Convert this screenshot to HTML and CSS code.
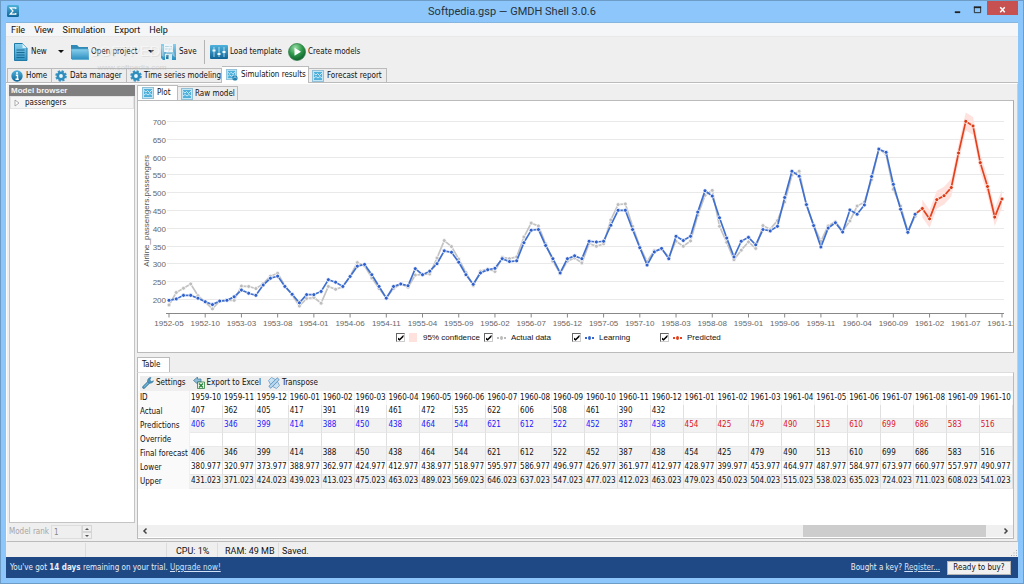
FILE: index.html
```html
<!DOCTYPE html>
<html lang="en">
<head>
<meta charset="utf-8">
<title>Softpedia.gsp — GMDH Shell 3.0.6</title>
<link rel="stylesheet" href="styles.css">
</head>
<body>
<svg width="0" height="0" class="defs" aria-hidden="true">
  <defs>
    <linearGradient id="blue" x1="0" y1="0" x2="0" y2="1"><stop offset="0" stop-color="#4fb3dc"/><stop offset="1" stop-color="#0f6496"/></linearGradient>
    <linearGradient id="sky" x1="0" y1="0" x2="0" y2="1"><stop offset="0" stop-color="#8ad0ee"/><stop offset="1" stop-color="#2c8fc0"/></linearGradient>
    <radialGradient id="green" cx=".4" cy=".25" r=".8"><stop offset="0" stop-color="#9bdca6"/><stop offset=".5" stop-color="#2f9a4b"/><stop offset="1" stop-color="#0c5a2a"/></radialGradient>
    <symbol id="i-chart" viewBox="0 0 12 12">
      <rect x=".5" y=".5" width="11" height="11" fill="#c4e5f4" stroke="#8fc0d8"/>
      <rect x="2" y="2" width="8" height="8" fill="#4fb0da"/>
      <path d="M2 3.500l2 1.500 1.500-1.500 2 2L10 3M2 8l2-1.500L6 8l2-1.500L10 8" fill="none" stroke="#e8f7ff" stroke-width=".8"/>
    </symbol>
    <symbol id="i-gear" viewBox="0 0 12 12">
      <circle cx="6" cy="6" r="4.800" fill="none" stroke="#3a95c2" stroke-width="2" stroke-dasharray="2.200 1.570"/>
      <circle cx="6" cy="6" r="3.200" fill="#e9f6fc" stroke="#2f8dbd" stroke-width="2.600"/>
    </symbol>
  </defs>
</svg>
<div class="window">
  <header class="titlebar">
    <svg class="app-icon" viewBox="0 0 12 12"><rect width="12" height="12" rx="1.500" fill="url(#blue)"/><path d="M8.800 4V2.800H3.200L6 6 3.200 9.200h5.600V8" fill="none" stroke="#fff" stroke-width="1.200"/></svg>
    <h1 class="title">Softpedia.gsp — GMDH Shell 3.0.6</h1>
    <div class="window-buttons">
      <button class="wb" aria-label="Minimize"><svg viewBox="0 0 10 10"><path d="M2 8h6" stroke="#222" stroke-width="2"/></svg></button>
      <button class="wb" aria-label="Maximize"><svg viewBox="0 0 10 10"><path d="M1.500 2v6.500h7V2" fill="none" stroke="#222"/><path d="M1 2.500h8" stroke="#222" stroke-width="2"/></svg></button>
      <button class="wb close" aria-label="Close"><svg viewBox="0 0 10 10"><path d="M2.500 2.500l5 5.500M7.500 2.500l-5 5.500" stroke="#fff" stroke-width="1.700"/></svg></button>
    </div>
  </header>

  <div class="client">
    <nav class="menu">
      <button>File</button><button>View</button><button>Simulation</button><button>Export</button><button>Help</button>
    </nav>

    <div class="toolbar">
      <button class="tool new"><svg class="big" viewBox="0 0 18 18"><path d="M3.500 .5h8L16 5v12.500H3.500z" fill="url(#sky)" stroke="#1f7aa8"/><path d="M11.500 .5V5H16z" fill="#d8f0fb"/><path d="M5.500 7h8M5.500 9.500h8M5.500 12h8M5.500 14.500h8" stroke="#1a6a96" stroke-width="1"/></svg>New</button>
      <button class="drop" aria-label="New options"></button>
      <button class="tool open"><svg class="big" viewBox="0 0 18 18"><path d="M0 2h6l2 2h9v12H0z" fill="#2f8ab8"/><path d="M0 6h17l1 10.500H1z" fill="url(#sky)" stroke="#4ea5cb" stroke-width=".6"/></svg>Open project</button>
      <button class="drop" aria-label="Open options"></button>
      <button class="tool save"><svg class="big" viewBox="0 0 18 18"><path d="M0 1h15v16H2l-2-2z" fill="url(#sky)"/><path d="M3 1h9v8H3z" fill="#edf6fa"/><path d="M4 3.500h7M4 6h7" stroke="#b8d5e2"/><path d="M4 11h7v6H4z" fill="#d9edf5"/><path d="M5 12h2.500v4H5z" fill="#28789f"/></svg>Save</button>
      <span class="divider"></span>
      <button class="tool load"><svg class="big" viewBox="0 0 18 18"><rect y="2" width="18" height="14" rx="1" fill="url(#blue)"/><path d="M4 4v10M9 4v10M14 4v10" stroke="#cdeaf7" stroke-width=".8"/><path d="M2.500 7.500h3M7.500 11h3M12.500 9h3" stroke="#f2fbff" stroke-width="2"/></svg>Load template</button>
      <button class="tool create"><svg class="big" viewBox="0 0 18 18"><circle cx="9" cy="9" r="8.500" fill="url(#green)" stroke="#2b7a45" stroke-width=".7"/><path d="M6.500 4.800l6.500 4-6.500 4z" fill="#fff"/></svg>Create models</button>
      <div class="watermark" aria-hidden="true"><span class="wm-name">SOFTPEDIA</span><span class="wm-site">www.softpedia.com</span></div>
    </div>

    <div class="tabs main-tabs" role="tablist">
      <button role="tab" class="tab t-home"><svg class="ico" viewBox="0 0 12 12"><circle cx="6" cy="6" r="5.700" fill="url(#blue)"/><path d="M4.800 5.200h1.700V9M4.500 9.200h3.300" fill="none" stroke="#fff" stroke-width="1.400"/><circle cx="6" cy="3" r="1" fill="#fff"/></svg>Home</button>
      <button role="tab" class="tab t-data"><svg class="ico"><use href="#i-gear"/></svg>Data manager</button>
      <button role="tab" class="tab t-time tight"><svg class="ico"><use href="#i-gear"/></svg>Time series modeling</button>
      <button role="tab" class="tab t-sim active" aria-selected="true"><svg class="ico" viewBox="0 0 12 12"><use href="#i-chart" width="11" height="11"/><circle cx="9" cy="9" r="2.600" fill="#2380b0"/><path d="M7.500 9c1-1.300 2-1.300 3 0" stroke="#d9f1fb" fill="none" stroke-width=".9"/></svg>Simulation results</button>
      <button role="tab" class="tab t-report"><svg class="ico"><use href="#i-chart"/></svg>Forecast report</button>
    </div>

    <main class="workspace">
      <aside class="browser">
        <h2 class="browser-title">Model browser</h2>
        <div class="tree" role="tree">
          <div class="tree-row" role="treeitem"><svg class="twist" viewBox="0 0 6 8"><path d="M1 1l4 3-4 3z" fill="#fff" stroke="#999" stroke-width=".8"/></svg>passengers</div>
        </div>
        <div class="rank">
          <label for="rank">Model rank</label>
          <input id="rank" type="number" value="1" disabled>
          <span class="spin"><button disabled aria-label="Increase"><i class="up"></i></button><button disabled aria-label="Decrease"><i class="down"></i></button></span>
        </div>
      </aside>

      <section class="content">
        <div class="tabs plot-tabs" role="tablist">
          <button role="tab" class="tab t-plot active" aria-selected="true"><svg class="ico"><use href="#i-chart"/></svg>Plot</button>
          <button role="tab" class="tab t-raw tight"><svg class="ico"><use href="#i-chart"/></svg>Raw model</button>
        </div>
        <div class="plot">
          <svg id="chart" class="chart" role="img" aria-label="Airline passengers forecast"></svg>
          <div class="legend">
            <label><input type="checkbox" checked><span class="swatch"></span>95% confidence</label>
            <label><input type="checkbox" checked><span class="mark gray"></span>Actual data</label>
            <label><input type="checkbox" checked><span class="mark blue"></span>Learning</label>
            <label><input type="checkbox" checked><span class="mark red"></span>Predicted</label>
          </div>
        </div>

        <div class="tabs table-tabs" role="tablist"><button role="tab" class="tab t-table active" aria-selected="true">Table</button></div>
        <div class="table-panel">
          <div class="table-tools">
            <button class="tool"><svg class="ico" viewBox="0 0 12 12"><path d="M1.800 10.200l5-5" stroke="#2b6f96" stroke-width="3" stroke-linecap="round"/><path d="M2 10l5-5" stroke="#74b4d6" stroke-width="1.600" stroke-linecap="round"/><path d="M9 .5a3.400 3.400 0 0 0-3.400 4.300 3.400 3.400 0 0 0 6-1L9.500 4.500 7.800 3z" fill="#4a93bb" stroke="#2b6f96" stroke-width=".5"/></svg>Settings</button>
            <button class="tool"><svg class="ico" viewBox="0 0 12 12"><path d="M4.500 0L.5 3.500l4 3.500V5H8V2H4.500z" fill="#8dbcd6" stroke="#3c7598" stroke-width=".7"/><path d="M4.500 5h7v6.500h-7z" fill="#eaf6e8" stroke="#2b7d3c" stroke-width=".8"/><path d="M6 6.500l4 4M10 6.500l-4 4" stroke="#23853a" stroke-width="1.300"/></svg>Export to Excel</button>
            <button class="tool"><svg class="ico" viewBox="0 0 12 12"><path d="M.5 3.500L3.500 .5l4 2L2.500 7.500zM4.500 9.500L9.500 4.500l2 4-3 3z" fill="#c9e2f3" stroke="#6d9fc4" stroke-width=".8"/><path d="M1.500 10.500L10.500 1.500" stroke="#6298c0" stroke-width="3.200"/><path d="M2 10L10 2" stroke="#b9daf0" stroke-width="1.900"/></svg>Transpose</button>
          </div>
          <table class="grid" id="grid"></table>
          <div class="scroll">
            <button aria-label="Scroll left"><svg viewBox="0 0 8 8"><path d="M5.500 1.500L3 4l2.500 2.500" fill="none" stroke="#444" stroke-width="1.500"/></svg></button>
            <div class="track"><div class="thumb"></div></div>
            <button aria-label="Scroll right"><svg viewBox="0 0 8 8"><path d="M2.500 1.500L5 4 2.500 6.500" fill="none" stroke="#444" stroke-width="1.500"/></svg></button>
          </div>
        </div>
      </section>
    </main>

    <div class="status">
      <span class="s1"></span><span class="s2"></span><span class="s3">CPU: 1%</span><span class="s4">RAM: 49 MB</span><span class="s5">Saved.</span>
      <svg class="grip" viewBox="0 0 8 8"><path d="M6 1h1v1H6zM6 3.500h1v1H6zM3.500 3.500h1v1h-1zM6 6h1v1H6zM3.500 6h1v1h-1zM1 6h1v1H1z" fill="#aaa"/></svg>
    </div>
    <footer class="trial">
      <p>You've got <b>14 days</b> remaining on your trial. <a href="#">Upgrade now!</a></p>
      <p class="buy">Bought a key? <a href="#">Register...</a></p>
      <button class="buy-button">Ready to buy?</button>
    </footer>
  </div>
</div>
<script src="script.js"></script>
</body>
</html>
```
FILE: styles.css
```css
* { box-sizing: border-box; }
body { margin: 0; font: 8px/12px "DejaVu Sans Condensed", "Noto Sans", sans-serif; color: #111; }
button { margin: 0; padding: 0; border: 0; background: none; font: inherit; color: inherit; white-space: nowrap; }
h1, h2, p { margin: 0; font: inherit; }
.defs { position: absolute; }

.window { display: flex; flex-direction: column; height: 100vh; padding: 0 5px 5px; background: #8cc6fa; border: 1px solid #6d9cc7; }
.titlebar { display: flex; align-items: flex-start; height: 21px; }
.app-icon { width: 12px; height: 12px; margin: 4px 0 0 1px; }
.title { flex: 1; padding-left: 58px; text-align: center; font: 11px/21px Roboto, sans-serif; color: #27323c; }
.window-buttons { display: flex; }
.wb { width: 20px; height: 14px; }
.wb svg { display: block; width: 9px; height: 9px; margin: 2px auto 0; }
.wb.close { width: 31px; background: #c75050; }

.client { flex: 1; display: flex; flex-direction: column; min-height: 0; background: #efefef; border-top: 1px solid #84b6e0; }
.menu { display: flex; gap: 9px; height: 13px; padding-left: 5px; background: #f5f6f8; font: 9px/14px Roboto, sans-serif; }

.toolbar { position: relative; display: flex; align-items: center; height: 30px; padding-left: 5px; border-top: 1px solid #e8e8e8; }
.tool { display: flex; align-items: center; gap: 2px; }
.big { width: 18px; height: 18px; flex: none; }
.toolbar .new { width: 40px; }
.toolbar .open { width: 70px; }
.toolbar .save { width: 41px; gap: 0; }
.toolbar .load { width: 78px; }
.drop { width: 20px; height: 18px; }
.drop::after { content: ""; display: block; width: 0; margin: 0 auto; border: 3px solid transparent; border-top-color: #111; border-bottom: 0; }
.divider { width: 1px; height: 24px; margin: 0 5px 0 2px; background: #b4b4b4; }
.watermark { position: absolute; left: 71px; top: 4px; width: 110px; text-align: center; color: #fff; opacity: .4; pointer-events: none; }
.wm-name { display: block; font: 15px/20px "Liberation Sans", sans-serif; text-shadow: 1px 1px 0 #ccc; }
.wm-site { display: block; font: 8px/14px "Liberation Sans", sans-serif; color: #aaa; }

.tabs { display: flex; align-items: flex-end; flex: none; }
.tab { display: flex; align-items: center; gap: 3px; height: 14px; padding: 0 3px; background: #ededed; border: 1px solid #bbb; border-left: 0; border-bottom: 0; }
.tab.tight { gap: 2px; }
.tab.active { background: #fff; }
.ico { width: 12px; height: 12px; flex: none; }
.main-tabs { height: 17px; padding-left: 1px; border-bottom: 1px solid #bbb; }
.main-tabs .active { height: 17px; margin-bottom: -1px; }
.t-home { width: 45px; border-left: 1px solid #bbb; }
.t-data { width: 75px; }
.t-time { width: 95px; }
.t-sim, .t-plot { padding: 0 4px; }
.t-sim { width: 87px; }
.t-report { width: 78px; }

.workspace { flex: 1; display: flex; gap: 2px; min-height: 0; padding: 1px 3px 2px 2px; border: 1px solid #fff; border-right-color: #ccc; border-bottom-color: #bbb; }
.browser { width: 126px; display: flex; flex-direction: column; }
.browser-title { height: 11px; padding-left: 2px; font: bold 8px/11px "Liberation Sans", Arial, sans-serif; color: #f5f5f5; background: #7f7f7f; }
.tree { flex: 1; border: 1px solid #c4c4c4; border-top: 0; background: #fff; }
.tree-row { display: flex; align-items: center; gap: 5px; height: 13px; padding-left: 3px; background: #f5f5f5; border: 1px solid #e4e4e4; }
.twist { width: 6px; height: 8px; }
.rank { display: flex; align-items: center; height: 16px; padding-top: 2px; color: #a5a5a5; }
.rank input { width: 31px; height: 14px; margin-left: auto; padding: 0 2px; border: 1px solid #ddd; background: #efefef; font: inherit; color: #888; appearance: textfield; }
.rank input::-webkit-inner-spin-button { appearance: none; }
.spin { display: flex; flex-direction: column; width: 10px; margin-right: 43px; }
.spin button { height: 7px; border: 1px solid #d5d5d5; }
.up, .down { display: block; width: 0; margin: 0 auto; border: 2px solid transparent; }
.up { border-top: 0; border-bottom-color: #555; }
.down { border-bottom: 0; border-top-color: #555; }

.content { flex: 1; min-width: 0; display: flex; flex-direction: column; }
.plot-tabs { height: 15px; }
.plot-tabs .active { height: 15px; border-left: 1px solid #bbb; }
.t-plot { width: 41px; }
.t-raw { width: 60px; }
.plot { flex: 14; display: flex; flex-direction: column; min-height: 0; background: #fff; border: 1px solid #bbb; border-right-color: #aaa; }
.chart { flex: 1; width: 100%; min-height: 0; display: block; font: 8px "Liberation Sans", Arial, sans-serif; }
.legend { display: grid; grid-template-columns: repeat(4, 88px); justify-content: center; height: 20px; padding-right: 7px; }
.legend label { display: flex; align-items: center; gap: 4px; height: 12px; white-space: nowrap; font: 8px/12px "Liberation Sans", Arial, sans-serif; }
.legend input { display: grid; place-items: center; appearance: none; width: 9px; height: 9px; margin: 0; background: #fff; border: 1px solid #ccc; border-top-color: #666; border-left-color: #666; }
.legend input:checked::after { content: ""; width: 6px; height: 6px; background: #000; clip-path: polygon(0 40%, 35% 65%, 100% 0, 100% 35%, 35% 100%, 0 75%); }
.swatch { width: 8px; height: 9px; margin-right: 2px; background: #ffe1de; }
.mark { position: relative; width: 9px; height: 2px; margin-right: 1px; background: linear-gradient(to right, currentColor 2px, transparent 2px 7px, currentColor 7px); }
.mark::after { content: ""; position: absolute; left: 3px; top: -1px; width: 3px; height: 4px; border-radius: 50%; background: currentColor; }
.gray { color: #bbb; }
.blue { color: #3465cd; }
.red { color: #e2431e; }

.table-tabs { height: 19px; padding-top: 4px; }
.table-tabs .active { height: 15px; }
.t-table { width: 33px; padding: 0 4px; border-left: 1px solid #bbb; }
.table-panel { flex: 9; display: flex; flex-direction: column; min-height: 0; padding: 3px 0 1px; background: #fff; border: 1px solid #bbb; border-top-color: #ddd; }
.table-tools { display: flex; gap: 7px; height: 15px; padding-left: 2px; margin-left: 2px; background: #efefef; }
.grid { width: 100%; table-layout: fixed; border-collapse: separate; border-spacing: 0; }
.grid th, .grid td { height: 14px; padding: 0 0 0 1px; border-right: 1px solid #e0e0e0; overflow: hidden; font-weight: normal; text-align: left; line-height: 12px; white-space: nowrap; }
.grid td { border-bottom: 1px solid #e9e9e9; }
.grid thead th { border-color: #f6f6f6; }
.grid th:first-child { width: 52px; padding-left: 2px; background: #fafafa; border-color: #f0f0f0; }
.grid .shade td { background: #f2f2f2; }
.grid .learned { color: #1a1aff; }
.grid .forecast { color: #dc1428; }
.scroll { display: flex; align-items: center; height: 12px; margin-top: auto; background: #f0f0f0; }
.scroll button { width: 14px; height: 12px; }
.scroll svg { display: block; width: 8px; height: 8px; margin: 0 auto; }
.track { flex: 1; display: flex; justify-content: flex-end; height: 12px; padding-right: 13px; }
.thumb { width: 22%; background: #cdcdcd; }

.status { display: flex; height: 15px; padding-top: 1px; font: 9px/16px Roboto, sans-serif; }
.status span { border-right: 1px solid #dcdcdc; white-space: nowrap; }
.status .s1 { width: 80px; }
.status .s2 { width: 81px; }
.status .s3 { width: 51px; padding-left: 9px; }
.status .s4 { width: 61px; padding-left: 7px; }
.status .s5 { flex: 1; padding-left: 3px; border: 0; }
.grip { width: 8px; height: 8px; align-self: flex-end; }
.trial { display: flex; align-items: center; height: 21px; padding: 0 7px 0 4px; background: #1f4985; color: #e9eef6; }
.trial a { color: #d4e2f7; }
.buy { margin-left: auto; }
.buy-button { width: 64px; height: 14px; margin-left: 7px; background: #f0f0f0; border: 1px solid #b5b5b5; color: #111; line-height: 12px; }
```
FILE: script.js
```js
const actual = [183,218,230,242,209,191,172,194,196,196,236,235,229,243,264,272,237,211,180,201,204,188,235,227,234,264,302,293,259,229,203,229,242,233,267,269,270,315,364,347,312,274,237,278,284,277,317,313,318,374,413,405,355,306,271,306,315,301,356,348,355,422,465,467,404,347,305,336,340,318,362,348,363,435,491,505,404,359,310,337,360,342,406,396,420,472,548,559,463,407,362,405,417,391,419,461,472,535,622,606,508,461,390,432];
const learned = [196,200,210,210,202,192,184,194,196,206,225,216,210,239,258,264,235,213,189,212,212,221,254,247,235,263,292,297,268,235,202,235,242,237,285,268,278,299,335,331,303,268,241,273,282,286,313,305,307,358,393,395,350,313,273,313,321,313,362,360,362,407,449,449,395,344,295,332,342,313,376,364,376,444,504,489,428,371,318,362,373,352,395,391,404,485,559,545,465,406,346,399,414,388,450,438,464,544,621,612,522,452,387,438];
const predicted = [454,425,479,490,513,610,699,686,583,516,430,481];
const firstYear = 1952, firstMonth = 4, count = 116;

function monthLabel(i) {
  const m = firstMonth + i;
  return (firstYear + Math.floor(m / 12)) + "-" + String(m % 12 + 1).padStart(2, "0");
}

function drawChart() {
  const svg = document.getElementById("chart");
  const box = svg.getBoundingClientRect();
  const w = box.width, h = box.height;
  const left = 31, right = w - 11, top = 20, bottom = h - 19;
  const x = i => left + i * (right - left) / (count - 1);
  const y = v => top + (700 - v) * (bottom - top) / 539;
  const line = (data, start, color) => {
    const pts = data.map((v, i) => [x(start + i), y(v)]);
    return `<polyline points="${pts.map(p => p.join()).join(" ")}" fill="none" stroke="${color}" stroke-width="1.700"/>`;
  };
  const dots = (data, start, color) => data.map((v, i) =>
    `<circle cx="${x(start + i)}" cy="${y(v)}" r="2" fill="${color}" stroke="#fff" stroke-width=".8"/>`).join("");
  let out = "";
  for (let v = 200; v <= 700; v += 50) {
    const gy = Math.round(y(v)) + 0.5;
    out += `<path d="M${left - 2} ${gy}H${right + 2}" stroke="#e9e9e9"/><text x="${left - 3}" y="${gy + 3}" text-anchor="end" fill="#666">${v}</text>`;
  }
  const by = Math.round(bottom) + 0.5;
  out += `<path d="M${left - 3} ${by}H${right + 2}" stroke="#888"/>`;
  for (let i = 0; i < count; i += 5) {
    out += `<path d="M${x(i)} ${by}v4" stroke="#888"/><text x="${x(i)}" y="${by + 12}" text-anchor="middle" fill="#666">${monthLabel(i)}</text>`;
  }
  out += `<text transform="translate(11 ${(top + bottom) / 2 - 6}) rotate(-90)" text-anchor="middle" fill="#555">Airline_passengers.passengers</text>`;
  const upper = predicted.map((v, i) => x(104 + i) + "," + y(v + 25));
  const lower = predicted.map((v, i) => x(104 + i) + "," + y(v - 25)).reverse();
  out += `<polygon points="${upper.concat(lower).join(" ")}" fill="#ffe1de"/>`;
  out += line(actual, 0, "#c4c4c4") + dots(actual, 0, "#bdbdbd");
  out += line([learned[103], predicted[0]], 103, "#e2431e");
  out += line(learned, 0, "#3f70d0") + dots(learned, 0, "#2f60cc");
  out += line(predicted, 104, "#e2431e") + dots(predicted, 104, "#dc3912");
  svg.innerHTML = out;
}

function fillGrid() {
  const from = 89, to = 113;
  const cols = [];
  for (let i = from; i <= to; i++) cols.push(i);
  const forecast = i => i < 104 ? learned[i] : predicted[i - 104];
  const row = (name, cls, cell) =>
    `<tr class="${cls}"><th scope="row">${name}</th>${cols.map(cell).join("")}</tr>`;
  const td = v => `<td>${v}</td>`;
  document.getElementById("grid").innerHTML =
    `<thead><tr><th scope="col">ID</th>${cols.map(i => `<th scope="col">${monthLabel(i)}</th>`).join("")}</tr></thead><tbody>` +
    row("Actual", "", i => td(actual[i] || "")) +
    row("Predictions", "shade", i => `<td class="${i < 104 ? "learned" : "forecast"}">${forecast(i)}</td>`) +
    row("Override", "", () => td("")) +
    row("Final forecast", "shade", i => td(forecast(i))) +
    row("Lower", "", i => td((forecast(i) - 25.023).toFixed(3))) +
    row("Upper", "shade", i => td((forecast(i) + 25.023).toFixed(3))) + "</tbody>";
}

fillGrid();
drawChart();
window.addEventListener("resize", drawChart);
```
